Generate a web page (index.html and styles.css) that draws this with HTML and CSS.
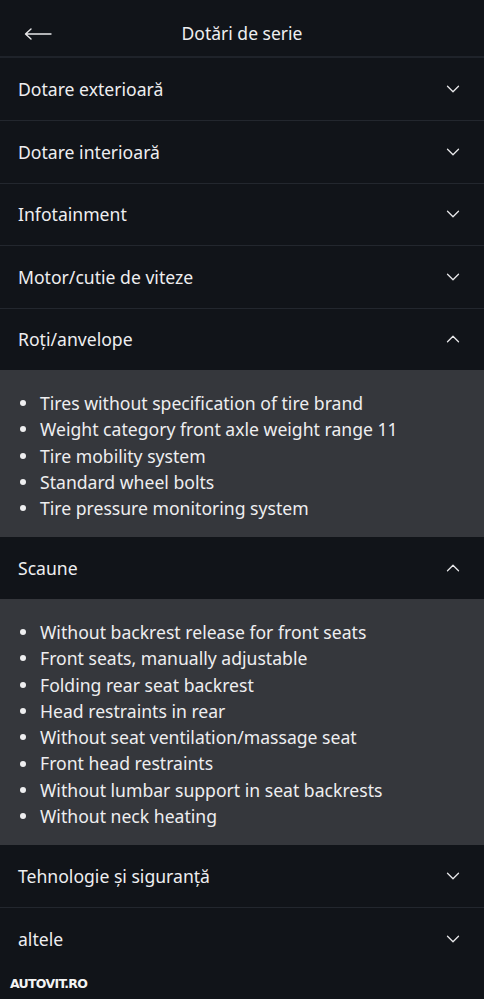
FILE: index.html
```html
<!DOCTYPE html>
<html lang="ro">
<head>
<meta charset="utf-8">
<title>Dotări de serie</title>
<link rel="stylesheet" href="styles.css">
</head>
<body>
<div class="page">
  <header class="topbar">
    <span class="back" aria-label="Înapoi">
      <svg width="28" height="12" viewBox="0 0 28 12"><path d="M27 6H2M7 1L1.5 6L7 11" fill="none" stroke="#e8e8ea" stroke-width="1.4" stroke-linecap="round" stroke-linejoin="round"/></svg>
    </span>
    <h1 class="title">Dotări de serie</h1>
  </header>

  <section class="sect">
    <div class="row"><span>Dotare exterioară</span><svg class="chev" width="14" height="8" viewBox="0 0 14 8"><path d="M1.5 1.2l5.5 5.5 5.5-5.5" fill="none" stroke="#e8e8ea" stroke-width="1.3" stroke-linecap="round" stroke-linejoin="round"/></svg></div>
  </section>
  <section class="sect">
    <div class="row"><span>Dotare interioară</span><svg class="chev" width="14" height="8" viewBox="0 0 14 8"><path d="M1.5 1.2l5.5 5.5 5.5-5.5" fill="none" stroke="#e8e8ea" stroke-width="1.3" stroke-linecap="round" stroke-linejoin="round"/></svg></div>
  </section>
  <section class="sect">
    <div class="row"><span>Infotainment</span><svg class="chev" width="14" height="8" viewBox="0 0 14 8"><path d="M1.5 1.2l5.5 5.5 5.5-5.5" fill="none" stroke="#e8e8ea" stroke-width="1.3" stroke-linecap="round" stroke-linejoin="round"/></svg></div>
  </section>
  <section class="sect">
    <div class="row"><span>Motor/cutie de viteze</span><svg class="chev" width="14" height="8" viewBox="0 0 14 8"><path d="M1.5 1.2l5.5 5.5 5.5-5.5" fill="none" stroke="#e8e8ea" stroke-width="1.3" stroke-linecap="round" stroke-linejoin="round"/></svg></div>
  </section>
  <section class="sect open">
    <div class="row"><span>Roți/anvelope</span><svg class="chev" width="14" height="8" viewBox="0 0 14 8"><path d="M1.5 6.8l5.5-5.5 5.5 5.5" fill="none" stroke="#e8e8ea" stroke-width="1.3" stroke-linecap="round" stroke-linejoin="round"/></svg></div>
    <ul class="list">
      <li>Tires without specification of tire brand</li>
      <li>Weight category front axle weight range 11</li>
      <li>Tire mobility system</li>
      <li>Standard wheel bolts</li>
      <li>Tire pressure monitoring system</li>
    </ul>
  </section>
  <section class="sect open">
    <div class="row"><span>Scaune</span><svg class="chev" width="14" height="8" viewBox="0 0 14 8"><path d="M1.5 6.8l5.5-5.5 5.5 5.5" fill="none" stroke="#e8e8ea" stroke-width="1.3" stroke-linecap="round" stroke-linejoin="round"/></svg></div>
    <ul class="list">
      <li>Without backrest release for front seats</li>
      <li>Front seats, manually adjustable</li>
      <li>Folding rear seat backrest</li>
      <li>Head restraints in rear</li>
      <li>Without seat ventilation/massage seat</li>
      <li>Front head restraints</li>
      <li>Without lumbar support in seat backrests</li>
      <li>Without neck heating</li>
    </ul>
  </section>
  <section class="sect">
    <div class="row"><span>Tehnologie şi siguranţă</span><svg class="chev" width="14" height="8" viewBox="0 0 14 8"><path d="M1.5 1.2l5.5 5.5 5.5-5.5" fill="none" stroke="#e8e8ea" stroke-width="1.3" stroke-linecap="round" stroke-linejoin="round"/></svg></div>
  </section>
  <section class="sect last">
    <div class="row"><span>altele</span><svg class="chev" width="14" height="8" viewBox="0 0 14 8"><path d="M1.5 1.2l5.5 5.5 5.5-5.5" fill="none" stroke="#e8e8ea" stroke-width="1.3" stroke-linecap="round" stroke-linejoin="round"/></svg></div>
  </section>

  <div class="watermark">AUTOVIT.RO</div>
</div>
</body>
</html>
```
FILE: styles.css
```css
* { box-sizing: border-box; }
html, body { margin: 0; padding: 0; background: #111419; }
body {
  font-family: "Noto Sans", "Open Sans", sans-serif;
  color: #eeeef0;
  width: 484px;
  height: 999px;
  overflow: hidden;
}
.page { position: relative; height: 999px; }
.topbar {
  position: relative;
  height: 58px;
  padding-top: 10px;
  display: flex;
  align-items: center;
  justify-content: center;
  border-bottom: 2px solid #1f232a;
}
.back {
  position: absolute;
  left: 24px;
  top: 28px;
  display: flex;
}
.title {
  margin: 0;
  font-size: 17.5px;
  font-weight: 400;
  letter-spacing: 0;
}
.sect { border-bottom: 1px solid #23272e; }
.sect.open { border-bottom: none; }
.sect.last { border-bottom: none; }
.row {
  height: 62px;
  padding: 0 24px 0 18px;
  display: flex;
  align-items: center;
  justify-content: space-between;
  font-size: 17.6px;
}
.sect + .sect .row { height: 61.5px; }
.list {
  margin: 0;
  list-style: none;
  background: #35373c;
  padding: 20px 0 16px 20px;
  font-size: 17.6px;
  line-height: 26.3px;
}
.list li { display: flex; align-items: center; }
.list li::before {
  content: "";
  width: 6px;
  height: 6px;
  border-radius: 50%;
  background: #eeeef0;
  margin-right: 14px;
  flex: none;
}
.watermark {
  position: absolute;
  left: 10px;
  top: 976px;
  font-family: "DejaVu Sans", sans-serif;
  font-weight: 700;
  font-size: 12.5px;
  letter-spacing: -0.7px;
  color: #f4f4f4;
}
```
